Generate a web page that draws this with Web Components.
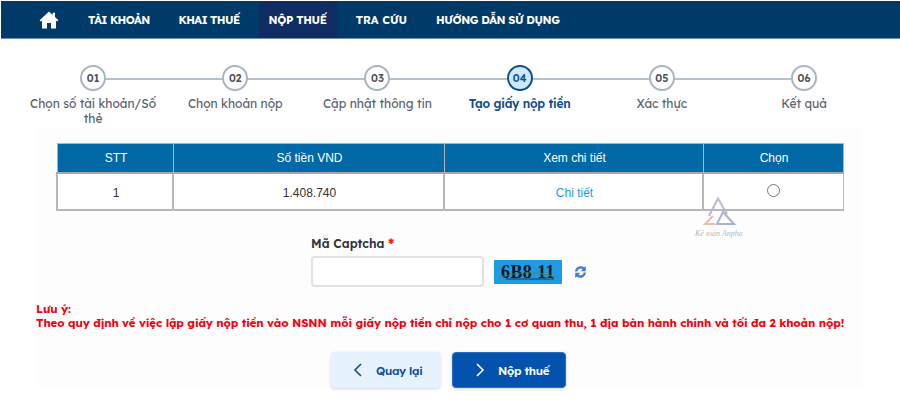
<!doctype html>
<html lang="vi"><head><meta charset="utf-8"><title>Nộp thuế</title>
<style>
html,body{margin:0;padding:0;background:#fff}
body{width:900px;height:404px;overflow:hidden;--ui:"Lexend","Be Vietnam Pro","Noto Sans",sans-serif;font-family:var(--ui)}
</style></head><body>
<tax-page>
<top-nav slot="nav"></top-nav>
<step-bar slot="steps" active="4"></step-bar>
<result-table slot="table"></result-table>
<captcha-field slot="captcha"></captcha-field>
<note-block slot="note" heading="Lưu ý:">Theo quy định về việc lập giấy nộp tiền vào NSNN mỗi giấy nộp tiền chỉ nộp cho 1 cơ quan thu, 1 địa bàn hành chính và tối đa 2 khoản nộp!</note-block>
<action-button slot="actions" kind="light" dir="left">Quay lại</action-button>
<action-button slot="actions" kind="primary" dir="right">Nộp thuế</action-button>
</tax-page>
<script>
function def(name, css, html){
  customElements.define(name, class extends HTMLElement{
    connectedCallback(){
      if(this.shadowRoot) return;
      const r=this.attachShadow({mode:'open'});
      r.innerHTML='<style>'+css+'</style>'+(typeof html==='function'?html(this):html);
    }
  });
}
def('tax-page',`
:host{display:block;width:900px;height:404px;background:#fff}
.nav{display:block;padding:1px 0 0 1px}
.steps{display:block;padding-top:26px}
.wrap{background:#fdfdfd;margin:0 39px 0 36px;padding:14px 0 0;height:244px;box-sizing:content-box}
.table{display:block;margin-left:-36px}
.cap{display:block;margin-left:-36px}
.note{display:block;padding:15px 0 0 0}
.actions{display:flex;gap:12px;padding:22px 0 0 295px}
`,`
<div class="nav"><slot name="nav"></slot></div>
<div class="steps"><slot name="steps"></slot></div>
<div class="wrap">
<div class="table"><slot name="table"></slot></div>
<div class="cap"><slot name="captcha"></slot></div>
<div class="note"><slot name="note"></slot></div>
<div class="actions"><slot name="actions"></slot></div>
</div>`);
def('top-nav',`
:host{display:flex;height:37px;background:#003a68;color:#fff;font:700 11.2px var(--ui);align-items:stretch;border-bottom:1px solid #6d8fb0;letter-spacing:-.6px;gap:9px}
a{display:flex;align-items:center;color:#fff;text-decoration:none;white-space:nowrap;padding:0 10px}
.home{width:68px;padding:0 0 0 38px;box-sizing:border-box}
.on{background:#0f2d62;letter-spacing:-.35px}
.t{letter-spacing:0}
.h{letter-spacing:-.43px}
`,`
<a class="home" aria-label="Trang chủ"><svg width="20" height="20" viewBox="0 0 20 20" fill="#fff"><path d="M10 1.500 0.600 10.200l1.300 1.300L3 10.600V18.500h5v-5.600h4v5.600h5V10.600l1.100.9 1.300-1.300-3.400-3.100V2.800h-2.400v2.300z"/></svg></a>
<a>TÀI KHOẢN</a><a>KHAI THUẾ</a><a class="on">NỘP THUẾ</a><a class="t">TRA CỨU</a><a class="h">HƯỚNG DẪN SỬ DỤNG</a>`);
def('step-bar',`
:host{display:grid;grid-template-columns:repeat(6,142.2px);margin-left:22px;height:64px;position:relative;color:#5b6270;font:400 12px/15px var(--ui)}
.line{position:absolute;left:71px;width:711px;top:13px;height:2px;background:#b6c0cf}
.s{display:flex;flex-direction:column;align-items:center;text-align:center;position:relative}
.c{width:26px;height:26px;box-sizing:border-box;border:2px solid #a9b4c4;border-radius:50%;background:#fff;display:flex;align-items:center;justify-content:center;font-weight:600;font-size:10.5px;color:#4a4f5a}
.l{margin-top:5px;padding:0 4px;width:136px;box-sizing:border-box}
.on .c{border-color:#0d4f8f;background:#cfe8fb;color:#0d4f8f}
.on .l{color:#0d4f8f;font-weight:600;letter-spacing:-.2px}
`,el=>{
  const a=['Chọn số tài khoản/Số thẻ','Chọn khoản nộp','Cập nhật thông tin','Tạo giấy nộp tiền','Xác thực','Kết quả'];
  return '<div class="line"></div>'+a.map((t,i)=>`<div class="s ${i+1==el.getAttribute('active')?'on':''}"><div class="c">0${i+1}</div><div class="l">${t}</div></div>`).join('');
});
def('result-table',`
:host{display:block;position:relative;margin-left:56px;width:786px;height:66px;font:400 12px "Liberation Sans",Arial,sans-serif}
table{border-collapse:collapse;table-layout:fixed;width:786px;height:66px}
th,td{border:1px solid #b7b7b7;text-align:center;padding:0 0 0 2px}
tr{height:29px}
tr+tr{height:37px}
th{background:#0069a6;color:#fff;font-weight:400;border-color:#a8b7c2;border-bottom:2px solid #a9a9a9}
td{background:#fff;color:#333;border-bottom-width:2px;border-left-width:2px;padding-top:4px}
a{color:#1f9be0}
.r{display:inline-block;width:13px;height:13px;border:1px solid #777;border-radius:50%;box-sizing:border-box;background:#fff;position:relative;top:-1px;left:-1px}
.mark{position:absolute;left:620px;top:54px;width:90px;height:46px;pointer-events:none}
.mark i{position:absolute;left:19px;top:32px;font:italic 8px "Liberation Serif",serif;color:#b3b7c2;white-space:nowrap}
svg{position:absolute;left:27px;top:0}
`,`
<table><colgroup><col style="width:116px"><col style="width:271px"><col style="width:259px"><col style="width:140px"></colgroup>
<tr><th>STT</th><th>Số tiền VND</th><th>Xem chi tiết</th><th>Chọn</th></tr>
<tr><td>1</td><td>1.408.740</td><td><a>Chi tiết</a></td><td><span class="r"></span></td></tr></table>
<div class="mark"><svg width="34" height="30" viewBox="0 0 34 30" fill="none"><path d="M6 19 15 1.500 24 17" stroke="#b4bbd4" stroke-width="2"/><path d="M20 15 14 27H31z" stroke="#aab2ce" stroke-width="2"/><path d="M10 19 2 27H12" stroke="#eebcae" stroke-width="2"/></svg><i>Kế toán Anpha</i></div>`);
def('captcha-field',`
:host{display:block;padding:27px 0 0 311px;font:400 12px var(--ui)}
label{display:block;font-weight:600;font-size:12.2px;line-height:16px;color:#30333a}
b{color:#e22}
.row{display:flex;align-items:center;margin-top:4px}
.in{width:173px;height:31px;box-sizing:border-box;border:2px solid #e2e2e2;border-radius:4px;background:#fff}
.cap{margin-left:10px;width:68px;height:24px;background:#1f9be3;position:relative;display:flex;align-items:center;justify-content:center;font:700 18px/24px "Liberation Serif",serif;color:#11181d;letter-spacing:.4px;overflow:hidden}
.cap svg{position:absolute;inset:0}
.ref{margin-left:12px;display:flex}
`,`
<label>Mã Captcha <b>*</b></label>
<div class="row"><div class="in"></div>
<div class="cap">6B8 11<svg width="68" height="24" fill="none"><path d="M6 17C22 13 40 10 62 17" stroke="#6d7a42" stroke-width=".7"/><path d="M12 19H60" stroke="#12202b" stroke-width=".8"/><path d="M36 5C46 12 50 16 58 20" stroke="#3a8a8a" stroke-width=".7"/></svg></div>
<div class="ref"><svg width="13" height="14" viewBox="0 0 13 14" fill="#3d7fd0"><path d="M1 6.500C1.300 3.300 3.800 1.200 6.600 1.200c1.400 0 2.700.5 3.600 1.400L11.800 1V6.200H6.800l1.800-1.900c-.6-.5-1.300-.8-2-.8-1.600 0-2.900 1.200-3.200 3z"/><path d="M12 7.500c-.3 3.200-2.800 5.300-5.600 5.300-1.400 0-2.700-.5-3.600-1.400L1.200 13V7.800H6.200L4.400 9.700c.6.500 1.300.8 2 .8 1.600 0 2.900-1.200 3.200-3z"/></svg></div></div>`);
def('note-block',`
:host{display:block;color:#f5000f;font:700 11.5px/14px var(--ui);white-space:nowrap;letter-spacing:-.125px}
`,el=>`<div>${el.getAttribute('heading')}</div><slot></slot>`);
def('action-button',`
:host{display:inline-flex;align-items:center;height:36px;box-sizing:border-box;border-radius:4px;font:600 11.6px var(--ui);box-shadow:0 1px 3px rgba(60,80,110,.25);white-space:nowrap;letter-spacing:-.3px}
:host([kind=light]){width:109px;background:#e6f2fd;color:#0e4f9e;padding-left:22px}
:host([kind=primary]){width:114px;background:#0353ae;color:#fff;padding-left:22px;border:1px solid #2a6cc0}
svg{margin-right:13px;flex:none}
`,el=>`<svg width="10" height="14" viewBox="0 0 10 14" fill="none" stroke="currentColor" stroke-width="1.6"><path d="${el.getAttribute('dir')==='left'?'M8 1 2 7l6 6':'M2 1l6 6-6 6'}"/></svg><slot></slot>`);
</script>
</body></html>
